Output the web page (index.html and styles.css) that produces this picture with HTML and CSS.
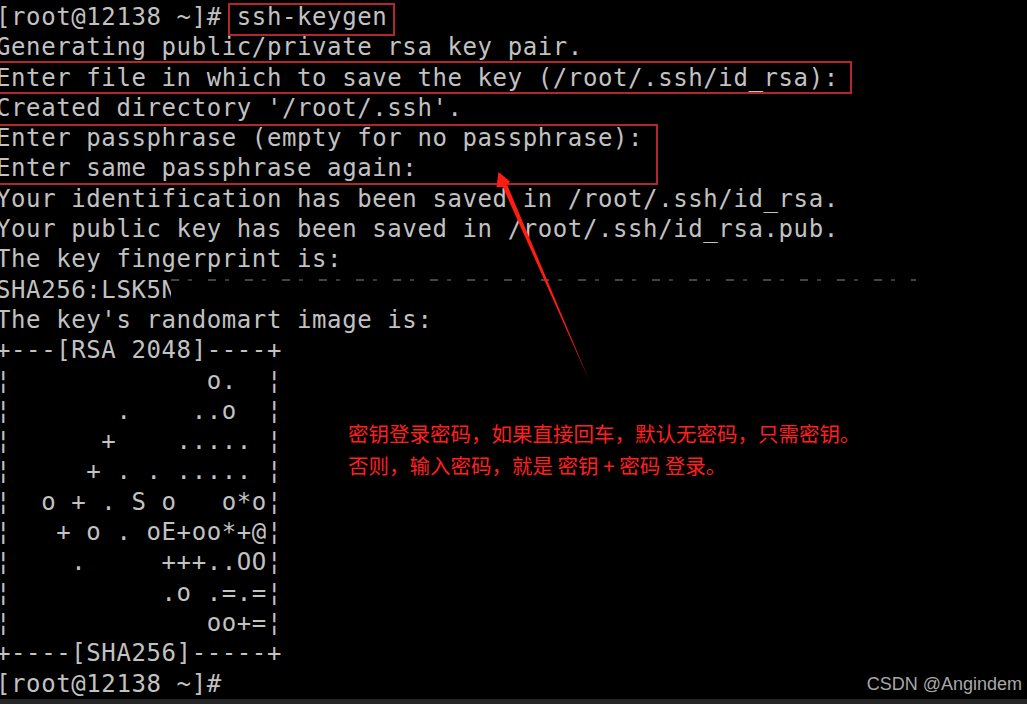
FILE: index.html
```html
<!DOCTYPE html>
<html lang="zh-CN">

<head>
  <meta charset="UTF-8">
  <meta name="viewport" content="width=device-width, initial-scale=1.0">
  <title>ssh-keygen</title>
  <link rel="stylesheet" href="styles.css">
</head>

<body>
  <div class="screen">
    <div class="term">
      <div class="line">[root@12138 ~]# <span class="mark mark-cmd">ssh-keygen</span></div>
      <div class="line">Generating public/private rsa key pair.</div>
      <div class="mark mark-file">
        <div class="line">Enter file in which to save the key (/root/.ssh/id_rsa):</div>
      </div>
      <div class="line">Created directory '/root/.ssh'.</div>
      <div class="mark mark-pass">
        <div class="line">Enter passphrase (empty for no passphrase):</div>
        <div class="line">Enter same passphrase again:</div>
      </div>
      <div class="line">Your identification has been saved in /root/.ssh/id_rsa.</div>
      <div class="line">Your public key has been saved in /root/.ssh/id_rsa.pub.</div>
      <div class="line">The key fingerprint is:</div>
      <div class="line line-hidden">SHA256:LSK5<span class="cut">N</span><span class="smudge"></span></div>
      <div class="line">The key's randomart image is:</div>
      <div class="line">+---[RSA 2048]----+</div>
      <div class="line">¦             o.  ¦</div>
      <div class="line">¦       .    ..o  ¦</div>
      <div class="line">¦      +    ..... ¦</div>
      <div class="line">¦     + . . ..... ¦</div>
      <div class="line">¦  o + . S o   o*o¦</div>
      <div class="line">¦   + o . oE+oo*+@¦</div>
      <div class="line">¦    .     +++..OO¦</div>
      <div class="line">¦          .o .=.=¦</div>
      <div class="line">¦             oo+=¦</div>
      <div class="line">+----[SHA256]-----+</div>
      <div class="line">[root@12138 ~]#</div>
    </div>

    <!-- стрелка к полю пароля -->
    <svg class="arrow" width="1027" height="700" viewBox="0 0 1027 700">
      <polygon points="498.5,172 510,181.5 507.3,185 589,380 502.8,187 496.5,187" fill="#ff1c12" />
    </svg>

    <div class="note">
      <div>密钥登录密码，如果直接回车，默认无密码，只需密钥。</div>
      <div>否则，输入密码，就是 密钥 + 密码 登录。</div>
    </div>

    <div class="watermark">CSDN @Angindem</div>
  </div>
  <div class="bottom-bar"></div>
</body>

</html>
```

FILE: styles.css
```css
:root {
  --term-bg: #000;
  --term-text: #c2c2c2;
  --mark-color: #b3262b;
  --note-color: #ff1f1f;
}

html,
body {
  margin: 0;
  padding: 0;
}

body {
  width: 1027px;
  height: 704px;
  overflow: hidden;
  background-color: var(--term-bg);
  display: flex;
  flex-direction: column;
}

.screen {
  position: relative;
  flex: 1;
  overflow: hidden;
}

.term {
  font-family: "DejaVu Sans Mono", "Liberation Mono", monospace;
  font-size: 24px;
  letter-spacing: 0.6px;
  line-height: 30.3px;
  color: var(--term-text);
  margin-left: -4px;
  padding-top: 2px;
}

.line {
  height: 30.3px;
  white-space: pre;
}

/* красные рамки */
.mark {
  position: relative;
}

.mark::after {
  content: "";
  position: absolute;
  border: 2px solid var(--mark-color);
}

.mark-cmd {
  display: inline-block;
}

.mark-cmd::after {
  top: 1px;
  bottom: -4px;
  left: -9px;
  right: -8px;
}

.mark-file,
.mark-pass {
  width: fit-content;
}

.mark-file::after {
  top: -2px;
  bottom: -1px;
  left: -20px;
  right: -13px;
}

.mark-pass::after {
  top: 1px;
  bottom: -1px;
  left: -20px;
  right: -15px;
}

.line-hidden {
  display: flex;
}

.cut {
  display: inline-block;
  width: 9px;
  overflow: hidden;
}

.smudge {
  width: 745px;
  height: 2px;
  margin-top: 4px;
  background: repeating-linear-gradient(90deg, #444 0 8px, transparent 8px 17px, #3a3a3a 17px 21px, transparent 21px 37px);
}

.arrow {
  position: absolute;
  top: 0;
  left: 0;
  pointer-events: none;
}

.note {
  position: absolute;
  top: 417px;
  left: 348px;
  font-family: "Noto Sans CJK SC", "Noto Sans", sans-serif;
  font-size: 20.5px;
  line-height: 32px;
  color: var(--note-color);
  white-space: nowrap;
}

.watermark {
  position: absolute;
  right: 5px;
  bottom: 4px;
  font-family: "Liberation Sans", Arial, sans-serif;
  font-size: 18px;
  color: #a8a8a8;
}

.bottom-bar {
  height: 5px;
  background-color: #262626;
}
```
